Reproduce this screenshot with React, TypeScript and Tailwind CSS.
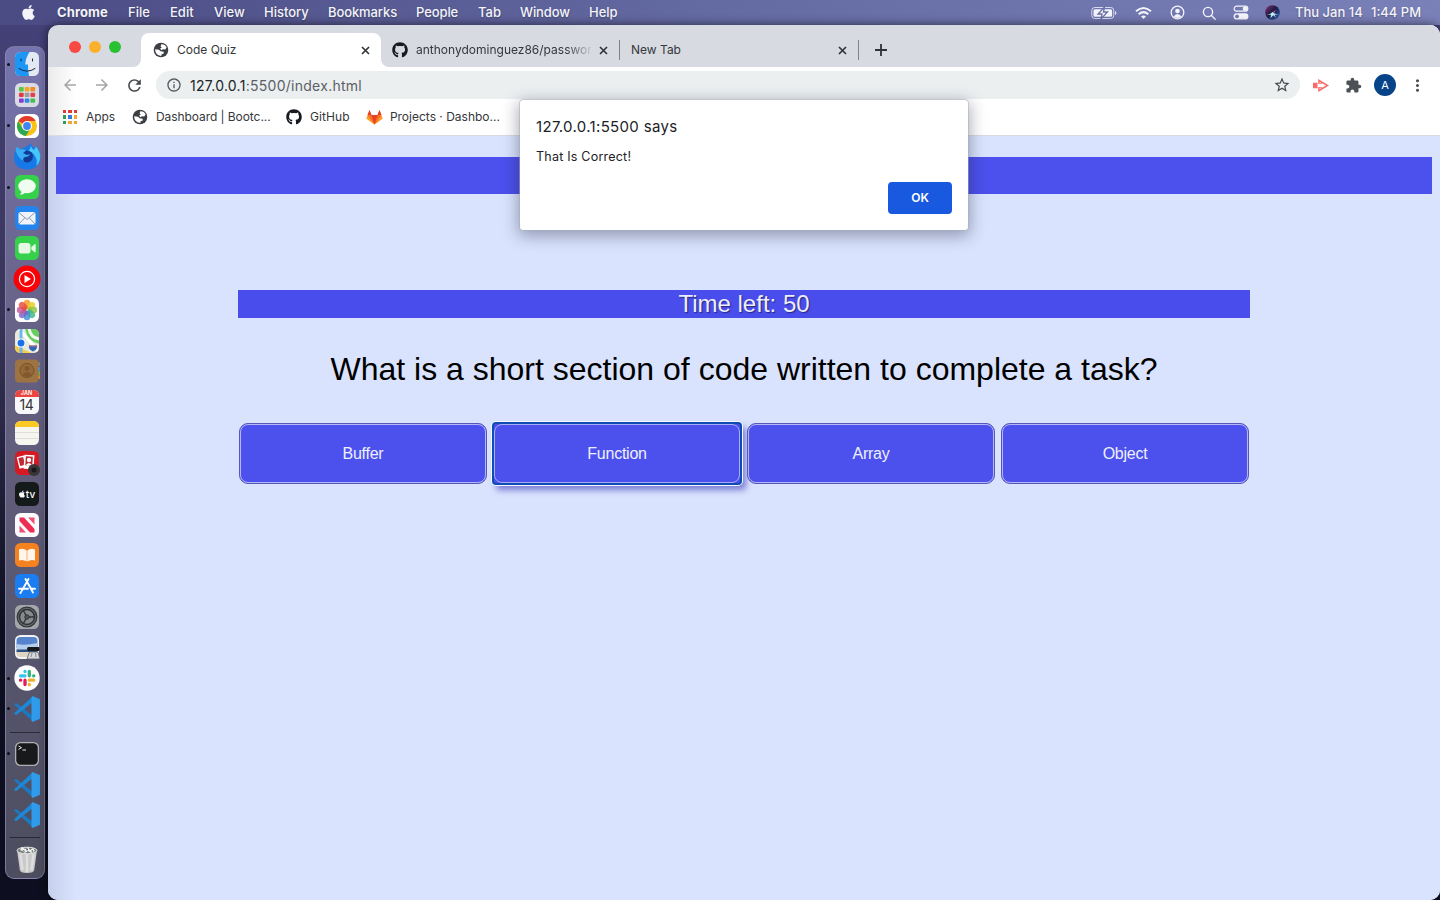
import React from "react";
import { FaApple, FaGithub } from "react-icons/fa";
import {
  MdArrowBack,
  MdArrowForward,
  MdExtension,
  MdInfoOutline,
  MdMoreVert,
  MdRefresh,
  MdStarBorder,
} from "react-icons/md";

type Kids = { children?: React.ReactNode };

const menus = [
  ["Chrome", "w-[71px] font-bold tracking-[0.1px]"],
  ["File", "w-[42px] font-medium"],
  ["Edit", "w-[44px] font-medium"],
  ["View", "w-[50px] font-medium"],
  ["History", "w-[64px] font-medium"],
  ["Bookmarks", "w-[88px] font-medium tracking-[-0.1px]"],
  ["People", "w-[62px] font-medium tracking-[-0.1px]"],
  ["Tab", "w-[42px] font-medium"],
  ["Window", "w-[69px] font-medium tracking-[-0.1px]"],
  ["Help", "font-medium"],
];

function MenuBar() {
  return (
    <header className="flex h-[25px] w-full shrink-0 items-center bg-linear-to-r from-[#4b4b84] via-[#646aa2] to-[#7a80b8] text-[13px] text-[#f4f4fb] [text-shadow:0_1px_2px_rgba(0,0,0,0.3)]">
      <FaApple className="ml-[20px] mr-[20px] size-[17px]" />
      {menus.map(([label, cls]) => (
        <span key={label} className={cls}>
          {label}
        </span>
      ))}
      <div className="ml-auto flex items-center">
        <svg className="mr-[18px] h-[14px] w-[26px]" viewBox="0 0 26 14">
          <rect x="0.8" y="1.5" width="22" height="11" rx="3" fill="none" stroke="#d8daee" strokeWidth="1" />
          <rect x="2.5" y="3.2" width="18.6" height="7.6" rx="1.5" fill="#f4f4fb" />
          <path d="M24 5v4q1.5-.6 1.5-2T24 5Z" fill="#d8daee" />
          <path d="M13.5 1 7 8h4l-1 5 6.500-7h-4z" fill="#f4f4fb" stroke="#696fa8" strokeWidth="1.300" />
        </svg>
        <svg className="mr-[18px] h-[14px] w-[17px]" viewBox="0 0 17 14" fill="none" stroke="#f4f4fb" strokeWidth="2">
          <path d="M1 5.300q7.500-6.500 15 0M3.700 8.200q4.800-4.200 9.600 0" />
          <path d="M8.500 13 6 10.500q2.500-2 5 0z" fill="#f4f4fb" stroke="none" />
        </svg>
        <svg className="mr-[17.500px] size-[15px]" viewBox="0 0 15 15">
          <circle cx="7.500" cy="7.500" r="6.300" fill="none" stroke="#f4f4fb" strokeWidth="1.300" />
          <circle cx="7.500" cy="6" r="2.300" fill="#f4f4fb" />
          <path d="M3.500 11.500q4-5 8 0-4 3-8 0Z" fill="#f4f4fb" />
        </svg>
        <svg className="mr-[17px] size-[14px]" viewBox="0 0 14 14" fill="none" stroke="#f4f4fb" strokeWidth="1.400">
          <circle cx="6" cy="6" r="4.600" />
          <path d="m9.500 9.500 3.700 3.700" strokeLinecap="round" />
        </svg>
        <svg className="mr-[16px] h-[15px] w-[16px]" viewBox="0 0 16 15">
          <rect x="1.200" y="1.200" width="13.600" height="5" rx="2.500" fill="none" stroke="#f4f4fb" strokeWidth="1.200" />
          <circle cx="12" cy="3.700" r="2.300" fill="#f4f4fb" />
          <rect x="0.600" y="8.200" width="14.800" height="6.300" rx="3.100" fill="#f4f4fb" />
          <circle cx="4" cy="11.300" r="1.900" fill="#7278b0" />
        </svg>
        <svg className="mr-[15px] size-[15px]" viewBox="0 0 15 15">
          <defs>
            <linearGradient id="siri" x1="0" y1="0" x2="1" y2="1">
              <stop offset="0" stopColor="#8d2f75" />
              <stop offset="0.45" stopColor="#1c1b40" />
              <stop offset="1" stopColor="#2b62b8" />
            </linearGradient>
          </defs>
          <circle cx="7.500" cy="7.500" r="7.300" fill="url(#siri)" />
          <path d="M1.500 10q3.500-.5 6-3 2 2 6 2.500l-4 .3 1.500 3-2.700-2.500-2.800 3 .5-3.500z" fill="#b9eef5" />
          <path d="m4.500 4 3.500 3 3-2.500-2 3.500z" fill="#e05b9c" />
        </svg>
        <span className="w-[76px] font-medium">Thu Jan 14</span>
        <span className="w-[69px] font-medium">1:44 PM</span>
      </div>
    </header>
  );
}

function Tile({ children }: Kids) {
  return (
    <svg className="size-[26px]" viewBox="0 0 26 26">
      {children}
    </svg>
  );
}

function Squircle({ fill }: { fill: string }) {
  return <rect x="1" y="1" width="24" height="24" rx="5.500" fill={fill} />;
}

function VsCode() {
  return (
    <Tile>
      <path d="M0 8.500 2 6.800l17 13.200v5.500z" fill="#1b78c2" />
      <path d="M0 17.500 2 19.300 19 6V0z" fill="#1f88d4" />
      <path d="M18.500 0 26 3.200v19.600L18.500 26l-1-1.500V1.500z" fill="#2f9bea" />
    </Tile>
  );
}

function Finder() {
  return (
    <Tile>
      <Squircle fill="#e3e8f2" />
      <path d="M6.500 1H15.500q-4 6-4.300 12.500H14q-.2 6 1 11.500H6.500A5.500 5.500 0 0 1 1 19.500v-13A5.500 5.500 0 0 1 6.500 1Z" fill="#1e96f5" />
      <path d="M7 8v2M18.500 8v2M5 17.500q8 5.500 16 0" stroke="#16283f" strokeWidth="1" fill="none" strokeLinecap="round" />
    </Tile>
  );
}

function Launchpad() {
  const colors = ["#52c845", "#f5a623", "#f08a24", "#e33b3b", "#999da5", "#e4404c", "#8a38cf", "#2d8ae5", "#45bd52"];
  return (
    <Tile>
      <Squircle fill="#d9dae3" />
      {colors.map((c, i) => (
        <rect key={i} x={5 + (i % 3) * 5.7} y={5 + Math.floor(i / 3) * 5.7} width="4.700" height="4.400" rx="1" fill={c} />
      ))}
    </Tile>
  );
}

function Chrome() {
  return (
    <Tile>
      <Squircle fill="#ffffff" />
      <circle cx="13" cy="13" r="10" fill="#fbc116" />
      <path d="M13 13 4.300 8A10 10 0 0 1 21.700 8H13Z" fill="#e33b2e" />
      <path d="M4.300 8a10 10 0 0 0 7.500 15l5-8L13 13l-4.500 2.500z" fill="#2da94f" />
      <circle cx="13" cy="13" r="5" fill="#fff" />
      <circle cx="13" cy="13" r="3.900" fill="#4285f4" />
    </Tile>
  );
}

function Firefox() {
  return (
    <svg className="-mx-px size-[28px]" viewBox="0 0 28 28">
      <path d="M2.500 8 4 4.500l3 3Q9.500 5.500 13 5l5-4q0 3 3 5l3-2q3 5 3.300 11Q27 27 14.500 27.500 2 27.500 1 16 1 11.500 2.500 8Z" fill="#1779e8" />
      <path d="M18 1q-1 4 3 7l2-3.500q4.500 5 4.300 11.500-.5 5-4.300 8 2-5-1-10-2-4-7-5 3-1.500 3-8Z" fill="#46c8fa" />
      <circle cx="14" cy="14.500" r="6" fill="#123b97" />
      <path d="M2.500 8 4 4.500l3 3q4-1 6 1l-3 2.500 4 2 3-1q-1 3-5 3-3 1-1 4-6-2-8.500-11Z" fill="#36adf5" />
    </svg>
  );
}

function Messages() {
  return (
    <Tile>
      <Squircle fill="#36d14b" />
      <ellipse cx="13" cy="12.200" rx="8.700" ry="7" fill="#f1fcf0" />
      <path d="m8 17-2 4q4-.5 6-3z" fill="#f1fcf0" />
    </Tile>
  );
}

function Mail() {
  return (
    <Tile>
      <Squircle fill="#2484ed" />
      <rect x="4.500" y="7" width="17" height="12.500" rx="1.800" fill="#f1f3f8" />
      <path d="m5 7.500 8 7 8-7M5 19l6-6.500M21 19l-6-6.500" fill="none" stroke="#8a9bb0" strokeWidth="1" />
    </Tile>
  );
}

function FaceTime() {
  return (
    <Tile>
      <Squircle fill="#36d14b" />
      <rect x="4.500" y="8" width="12" height="10.500" rx="2.800" fill="#e4f8e4" />
      <path d="m17.300 12 3.700-3q.7 0 .7 1v6.500q0 1-.7 1l-3.700-3z" fill="#e4f8e4" />
    </Tile>
  );
}

function YtMusic() {
  return (
    <svg className="-mx-px size-[28px]" viewBox="0 0 28 28">
      <circle cx="14" cy="14" r="13.500" fill="#fb0006" />
      <circle cx="14" cy="14" r="7.600" fill="none" stroke="#fff" strokeWidth="1.200" />
      <path d="m11.500 10 6.500 4-6.500 4z" fill="#fff" />
    </svg>
  );
}

function Photos() {
  const petals = ["#f59a23", "#e9cc24", "#8dc63f", "#3fb884", "#3c8fd9", "#7c62c2", "#c4549c", "#ea4b3c"];
  return (
    <Tile>
      <Squircle fill="#ffffff" />
      {petals.map((c, i) => (
        <rect key={c} x="9.800" y="2.800" width="6.400" height="9.500" rx="3.200" fill={c} fillOpacity="0.82" transform={`rotate(${i * 45} 13 13)`} />
      ))}
    </Tile>
  );
}

function Maps() {
  return (
    <Tile>
      <clipPath id="mapclip">
        <rect x="1" y="1" width="24" height="24" rx="5.500" />
      </clipPath>
      <g clipPath="url(#mapclip)">
        <rect width="26" height="26" fill="#e8ead9" />
        <path d="M11 0h15v16Q13 14 11 0Z" fill="#67cf60" />
        <path d="M15 0q1 10 11 11" stroke="#f4f5ee" strokeWidth="3" fill="none" />
        <path d="M0 17l26 12H0Z" fill="#f4cd46" />
        <path d="M4 0 26 25" stroke="#fff" strokeWidth="3" />
        <path d="M7 0v26" stroke="#6fb5f2" strokeWidth="3" />
        <circle cx="7" cy="15" r="4.600" fill="#fff" />
        <circle cx="7" cy="15" r="3.500" fill="#1b72e8" />
        <path d="M15 17q4 1 8 0 1 4.500-4 6.500-5-2-4-6.500Z" fill="#3065b9" />
        <path d="M15 17q4 1 8 0v1.600h-8z" fill="#d77482" />
      </g>
    </Tile>
  );
}

function Contacts() {
  return (
    <Tile>
      <rect x="23" y="4" width="3" height="4" rx="1" fill="#808489" />
      <rect x="23" y="9" width="3" height="4" rx="1" fill="#3d9bd9" />
      <rect x="23" y="13" width="3" height="4" rx="1" fill="#68b346" />
      <rect x="23" y="17" width="3" height="4" rx="1" fill="#e38d31" />
      <rect x="1" y="1.500" width="23.500" height="23" rx="4" fill="#9d7341" />
      <circle cx="13" cy="12.500" r="7" fill="#956a38" stroke="#76512a" strokeWidth="1" />
      <circle cx="13" cy="10.500" r="2.500" fill="#80592e" />
      <path d="M8 17q5-6 10 0-5 3.500-10 0Z" fill="#80592e" />
    </Tile>
  );
}

function Calendar() {
  return (
    <div className="flex size-[24px] flex-col items-center overflow-hidden rounded-[5.500px] bg-[#f8f8fa]">
      <span className="flex h-[7px] w-full items-center justify-center bg-[#ec453f] text-[5.500px] font-semibold leading-none text-white">JAN</span>
      <span className="text-[14px] leading-[15px] tracking-[-0.300px] text-[#333338]">14</span>
    </div>
  );
}

function Notes() {
  return (
    <Tile>
      <Squircle fill="#f7f5ef" />
      <path d="M1 7V6.500A5.500 5.500 0 0 1 6.500 1h13A5.500 5.500 0 0 1 25 6.500V7Z" fill="#fbc926" />
      <path d="M1 12.500h24M1 18.500h24" stroke="#d9d6ce" strokeWidth="0.700" />
    </Tile>
  );
}

function PhotoBooth() {
  return (
    <Tile>
      <Squircle fill="#d41a25" />
      <rect x="4" y="6" width="8" height="12" fill="#fff" transform="rotate(-14 8 12)" />
      <rect x="5.300" y="7.500" width="5" height="8" fill="#c22931" transform="rotate(-14 8 12)" />
      <rect x="10" y="5" width="10" height="14" fill="#fff" transform="rotate(4 15 12)" />
      <rect x="11.500" y="6.500" width="7" height="9" fill="#c22931" transform="rotate(4 15 12)" />
      <circle cx="15" cy="10" r="2.200" fill="#fff" />
      <path d="M11.500 15.500q3-5 7 0z" fill="#fff" />
      <circle cx="20" cy="20" r="6" fill="#3a3536" />
      <circle cx="20" cy="20" r="2.500" fill="#17171c" />
    </Tile>
  );
}

function AppleTv() {
  return (
    <div className="flex size-[24px] items-center justify-center rounded-[5.500px] bg-[#14191a] text-[10px] font-medium leading-none text-white">
      <FaApple className="size-[8px]" />
      <span>tv</span>
    </div>
  );
}

function News() {
  return (
    <Tile>
      <Squircle fill="#fbfafc" />
      <path d="M5.500 5.500H10L20.500 17v3.500H16L5.500 9Z" fill="#ec2c50" />
      <path d="M14 5.500h6.500V12.500ZM5.500 13.500v7H12Z" fill="#ee5170" />
    </Tile>
  );
}

function Books() {
  return (
    <Tile>
      <Squircle fill="#f5811f" />
      <path d="M12.700 8.500Q9 5.500 5 7.500V18.500q4-1.500 7.700 1zM13.300 8.500Q17 5.500 21 7.500V18.500q-4-1.500-7.700 1z" fill="#fff5ea" />
    </Tile>
  );
}

function AppStore() {
  return (
    <Tile>
      <Squircle fill="#1b7df0" />
      <path d="M14.500 6 8 17.500M11.500 6l7.500 13.500M5 15.800h9M17.500 15.800h3.500M7 19l-.6 1" stroke="#fff" strokeWidth="1.900" strokeLinecap="round" />
    </Tile>
  );
}

function Settings() {
  return (
    <Tile>
      <Squircle fill="#a3a7aa" />
      <circle cx="13" cy="13" r="9.800" fill="#6a6e71" stroke="#34373a" strokeWidth="1.300" />
      <circle cx="13" cy="13" r="7.500" fill="#888b8d" stroke="#303336" strokeWidth="1.500" />
      <path d="M13 13h7.500M13 13 9.300 6.500M13 13l-3.700 6.500" stroke="#303336" strokeWidth="1.400" />
      <circle cx="13" cy="13" r="2.200" fill="#555" stroke="#303336" />
    </Tile>
  );
}

function Preview() {
  return (
    <Tile>
      <Squircle fill="#f2f3f5" />
      <path d="M2.500 7q0-4 4-4h13q4 0 4 4v7h-21Z" fill="#5583cc" />
      <path d="M2.500 10q8 2 21-1v7h-21Z" fill="#b3cdec" />
      <path d="M2.500 15.500h21v3h-21Z" fill="#284f7d" />
      <path d="M2.500 18h21v1q0 4-4 4h-13q-4 0-4-4Z" fill="#dfd5c2" />
      <path d="M14 13h11q1 2 0 4H14q-2-2 0-4Z" fill="#16191c" />
      <path d="m15.500 18 8.500 0 2 7H13Z" fill="#d4d7dc" stroke="#555b60" strokeWidth="0.800" />
      <path d="m18 19-1 4M21.500 19l.5 4" stroke="#777" strokeWidth="0.800" />
    </Tile>
  );
}

function Slack() {
  return (
    <Tile>
      <circle cx="13" cy="13" r="12.700" fill="#fff" />
      <g strokeWidth="3.300" strokeLinecap="round">
        <path d="M11 6.300v.2M6.500 10.800H11" stroke="#36c5f0" />
        <path d="M15.300 6.500v4.300M19.600 10.800h.2" stroke="#2eb67d" />
        <path d="M15.300 15.200h4.300M15.300 19.500v.2" stroke="#ecb22e" />
        <path d="M11 15.200v4.300M6.500 15.200h.2" stroke="#e01e5a" />
      </g>
    </Tile>
  );
}

function Terminal() {
  return (
    <Tile>
      <rect x="1" y="1" width="24" height="24" rx="5.500" fill="#aeb0b4" />
      <rect x="2.300" y="2.300" width="21.400" height="21.400" rx="4.500" fill="#17191a" />
      <path d="m4.500 5 3 1.700-3 1.700M8.500 9h3.500" stroke="#fff" strokeWidth="0.900" fill="none" />
    </Tile>
  );
}

function Trash() {
  return (
    <svg className="h-[30px] w-[26px]" viewBox="0 0 26 30">
      <path d="m3 5 2.800 20q.4 3 7.200 3t7.200-3L23 5Z" fill="#c9c9c9" />
      <path d="m6.500 9 2 16M13 9v18M19.500 9l-2 16" stroke="#dedede" strokeWidth="2.500" />
      <ellipse cx="13" cy="5.500" rx="10" ry="3.300" fill="#777a78" stroke="#e6e6e6" strokeWidth="1" />
      <path d="m6 5 2-3 3 2 3-2 2 3 3-2 2 3-4 2-3-2-3 2-3-2z" fill="#f1f1ef" />
      <path d="m8 6 2-1 1 2zM17 6l2-1 0 2z" fill="#35775b" />
      <path d="m12 3 2 1-1 2z" fill="#252d45" />
    </svg>
  );
}

const apps: [React.ComponentType, boolean][] = [
  [Finder, true],
  [Launchpad, false],
  [Chrome, true],
  [Firefox, false],
  [Messages, true],
  [Mail, false],
  [FaceTime, false],
  [YtMusic, false],
  [Photos, true],
  [Maps, false],
  [Contacts, false],
  [Calendar, false],
  [Notes, false],
  [PhotoBooth, false],
  [AppleTv, false],
  [News, false],
  [Books, false],
  [AppStore, false],
  [Settings, false],
  [Preview, false],
  [Slack, true],
  [VsCode, true],
];

function DockItem({ running, children }: Kids & { running?: boolean }) {
  return (
    <div className="flex h-[30.700px] w-full shrink-0 items-center">
      <span className={running ? "ml-px size-[3px] rounded-full bg-[#10101c]" : "ml-px size-[3px]"} />
      <span className="ml-[2.500px] flex w-[28px] items-center justify-center">{children}</span>
    </div>
  );
}

function Dock() {
  return (
    <aside className="mt-[21px] ml-[5px] flex h-[833px] w-[40px] shrink-0 flex-col rounded-[9px] border border-[#8e8db1]/70 bg-linear-to-b from-[#7674ae] via-[#645f80] via-40% to-[#4d4d5f] pt-[2px]">
      {apps.map(([Icon, running], i) => (
        <DockItem key={i} running={running}>
          <Icon />
        </DockItem>
      ))}
      <div className="mx-[4px] mt-[7.500px] mb-[6px] h-px shrink-0 bg-[#292937]" />
      <DockItem running>
        <Terminal />
      </DockItem>
      <DockItem>
        <VsCode />
      </DockItem>
      <DockItem>
        <VsCode />
      </DockItem>
      <div className="mx-[4px] mt-[6.500px] mb-[6px] h-px shrink-0 bg-[#292937]" />
      <DockItem>
        <Trash />
      </DockItem>
    </aside>
  );
}

function Globe() {
  return (
    <svg className="size-[16px] shrink-0" viewBox="0 0 16 16">
      <circle cx="8" cy="8" r="7.300" fill="#3c4045" />
      <path d="M8.300 2.300Q12 2 13.600 5.600L12.200 7.400 9.800 7.200 8.700 8.300 7 6.800 8.800 5.400 7.600 4.400Z" fill="#fff" />
      <path d="M2.100 7.300 6 7.700 7.600 9.300 10.600 9.700 10.800 11.400 8.600 12.200 8.300 13.900Q2.300 13.600 2.100 7.300Z" fill="#fff" />
    </svg>
  );
}

function Close({ className }: { className: string }) {
  return (
    <svg className={`size-[13px] shrink-0 ${className}`} viewBox="0 0 13 13">
      <path d="m3 3 7 7M10 3l-7 7" stroke="#2f3135" strokeWidth="1.600" />
    </svg>
  );
}

function TabStrip() {
  return (
    <div className="flex h-[42px] shrink-0 bg-[#d7dae1] text-[12px] text-[#35373b]">
      <div className="flex w-[85px] shrink-0 items-center gap-[8px] pl-[21px] pt-px">
        <i className="size-[12px] rounded-full bg-[#f94943]" />
        <i className="size-[12px] rounded-full bg-[#fbb02c]" />
        <i className="size-[12px] rounded-full bg-[#27c131]" />
      </div>
      <div className="flex w-[8px] items-end bg-white">
        <span className="h-full w-full rounded-br-[8px] bg-[#d7dae1]" />
      </div>
      <div className="flex w-[240px] items-end bg-[#d7dae1]">
        <div className="flex h-[34px] w-full items-center rounded-t-[8px] bg-white pl-[12px] pr-[9px]">
          <Globe />
          <span className="ml-[8px]">Code Quiz</span>
          <Close className="ml-auto" />
        </div>
      </div>
      <div className="flex flex-1 bg-white">
        <div className="flex flex-1 items-center rounded-bl-[8px] bg-[#d7dae1] pt-[8px]">
          <FaGithub className="ml-[11px] size-[16px] text-[#171b21]" />
          <span className="ml-[8px] w-[175px] overflow-hidden whitespace-nowrap [mask-image:linear-gradient(to_right,black_150px,transparent_178px)]">
            anthonydominguez86/passwor
          </span>
          <Close className="ml-[6px]" />
          <i className="ml-[9px] h-[20px] w-px bg-[#7f8289]" />
          <span className="ml-[11px] w-[205px]">New Tab</span>
          <Close className="" />
          <i className="ml-[9px] h-[20px] w-px bg-[#7f8289]" />
          <svg className="ml-[15px] size-[14px]" viewBox="0 0 14 14">
            <path d="M7 1v12M1 7h12" stroke="#2f3135" strokeWidth="1.800" />
          </svg>
        </div>
      </div>
    </div>
  );
}

function Toolbar() {
  return (
    <div className="flex h-[36px] shrink-0 items-center bg-linear-to-r from-[#ebebec] to-white to-[28px]">
      <MdArrowBack className="ml-[13px] size-[18px] text-[#a3a5a8]" />
      <MdArrowForward className="ml-[14px] size-[18px] text-[#a3a5a8]" />
      <MdRefresh className="ml-[14px] size-[19px] text-[#45484d]" />
      <div className="ml-[12px] flex h-[28px] w-[1144px] items-center rounded-full bg-[#ebeff0] pl-[10px] pr-[9px] text-[14px]">
        <MdInfoOutline className="size-[16px] text-[#55595e]" />
        <span className="ml-[8px] tracking-[0.270px] text-[#202226]">
          127.0.0.1<span className="text-[#5c6066]">:5500/index.html</span>
        </span>
        <MdStarBorder className="ml-auto size-[18px] text-[#45484d]" />
      </div>
      <svg className="ml-[12px] h-[13px] w-[17px]" viewBox="0 0 17 13">
        <path d="M1 3.800h4.500v5.400H1Z" fill="#fa6a6b" />
        <path d="M6.200 0 17 6.500 6.200 13V9l1.300-.800v2.100L14 6.500 7.500 2.700v2.100L6.200 4Z" fill="#fa6a6b" />
        <path d="M6.200 3.800h4v1h-4zM6.200 8.200h4v1h-4z" fill="#fa6a6b" />
      </svg>
      <MdExtension className="ml-[16px] size-[17px] text-[#4d5156]" />
      <span className="ml-[12px] flex size-[22px] items-center justify-center rounded-full bg-[#064389] text-[11px] text-white">A</span>
      <MdMoreVert className="ml-[12px] size-[19px] text-[#4d5156]" />
    </div>
  );
}

function Bookmarks() {
  const dots = [
    "bg-[#df3c32]", "bg-[#df3c32]", "bg-[#df3c32]",
    "bg-[#2e9c55]", "bg-[#3a76dc]", "bg-[#eea632]",
    "bg-[#2e9c55]", "bg-[#eea632]", "bg-[#eea632]",
  ];
  return (
    <div className="flex h-[33px] shrink-0 items-center border-b border-[#d9dbe0] bg-linear-to-r from-[#ebebec] to-white to-[28px] pb-[4px] text-[12px] text-[#35373b]">
      <div className="ml-[15px] grid grid-cols-3 gap-[2px]">
        {dots.map((d, i) => (
          <i key={i} className={`size-[3.300px] ${d}`} />
        ))}
      </div>
      <span className="ml-[9px] w-[46px]">Apps</span>
      <Globe />
      <span className="ml-[8px] w-[130px] whitespace-nowrap tracking-[-0.060px]">Dashboard | Bootc...</span>
      <FaGithub className="size-[16px] text-[#171b21]" />
      <span className="ml-[8px] w-[56px] tracking-[0.100px]">GitHub</span>
      <svg className="h-[16px] w-[17px]" viewBox="0 0 17 16">
        <path d="m8.500 15.500-8-6L3.500 1l2 5h6l2-5 3 8.500z" fill="#fc6d26" />
        <path d="m8.500 15.500-3-9.500h6z" fill="#e24329" />
        <path d="m.5 9.500 1-3 7 9zM16.500 9.500l-1-3-7 9z" fill="#fca326" />
        <path d="m3.500 1 2 5H1.500zM13.500 1l-2 5h4z" fill="#e24329" />
      </svg>
      <span className="ml-[7px] whitespace-nowrap">Projects · Dashbo...</span>
    </div>
  );
}

function Answer({ label, focused }: { label: string; focused?: boolean }) {
  return (
    <button
      className={
        focused
          ? "-mx-px -my-px flex h-[63px] w-[250px] items-center justify-center rounded-[4px] border-2 border-[#0f4bb5] bg-[#4c50ec] text-[16px] text-[#eef0ff] shadow-[0_0_0_1px_#f5f8ff,4px_5px_6px_0_rgba(40,40,180,0.55)]"
          : "flex h-[61px] w-[248px] items-center justify-center rounded-[9px] border border-[#5655b8] bg-[#4c50ec] text-[16px] text-[#eef0ff]"
      }
    >
      <span
        className={
          focused
            ? "flex h-full w-full items-center justify-center rounded-[8px] border border-[#a9adf7]"
            : "flex h-full w-full items-center justify-center rounded-[8px] border border-[#b5b7f4]"
        }
      >
        <span className="tracking-[-0.250px]">{label}</span>
      </span>
    </button>
  );
}

function QuizPage() {
  return (
    <main className="flex flex-1 flex-col bg-[#dae3fd] bg-linear-to-r from-[#c6d0ec] to-[#dae3fd] to-[28px] px-[8px] pt-[21px]">
      <div className="h-[37px] w-full shrink-0 bg-[#4c50ec]" />
      <section className="mx-auto mt-[96px] flex w-[1012px] flex-col items-center font-['Liberation_Sans',sans-serif]">
        <div className="flex h-[28px] w-full items-center justify-center bg-[#494dec] text-[24px] text-[#edeefb] [text-shadow:1px_1px_1px_#28297d]">
          Time left: 50
        </div>
        <h1 className="mt-[31px] h-[40px] whitespace-nowrap text-[32px] leading-[40px] text-black">
          What is a short section of code written to complete a task?
        </h1>
        <div className="mt-[34px] flex h-[61px] w-full items-start justify-between px-px">
          <Answer label="Buffer" />
          <Answer label="Function" focused />
          <Answer label="Array" />
          <Answer label="Object" />
        </div>
      </section>
    </main>
  );
}

function AlertDialog() {
  return (
    <div
      role="dialog"
      className="absolute top-[75px] left-[472px] flex h-[130px] w-[448px] flex-col rounded-[3px] bg-white px-[16px] pt-[17px] text-[#202226] shadow-[0_0_0_0.5px_#a9aeba,0_4px_16px_2px_rgba(30,35,60,0.38)]"
    >
      <p className="text-[15px] leading-[20px] tracking-[0.330px]">127.0.0.1:5500 says</p>
      <p className="mt-[11px] text-[12.500px] leading-[18px] tracking-[0.220px]">That Is Correct!</p>
      <button className="mt-[16px] h-[32px] w-[64px] self-end rounded-[4px] bg-[#1859df] text-[12px] font-semibold text-white">OK</button>
    </div>
  );
}

export default function App() {
  return (
    <div className="flex h-[900px] w-[1440px] flex-col overflow-hidden bg-linear-to-b from-[#44427a] via-[#39355a] via-35% to-[#0d0f20] to-70% font-['Inter',sans-serif]">
      <MenuBar />
      <div className="flex h-[875px] w-full">
        <Dock />
        <div className="relative ml-[3px] flex h-[875px] w-[1392px] shrink-0 flex-col rounded-[10px] shadow-[0_0_10px_rgba(0,0,0,0.6)]">
          <div className="flex flex-1 flex-col overflow-hidden rounded-[10px]">
            <TabStrip />
            <Toolbar />
            <Bookmarks />
            <QuizPage />
          </div>
          <AlertDialog />
        </div>
      </div>
    </div>
  );
}
